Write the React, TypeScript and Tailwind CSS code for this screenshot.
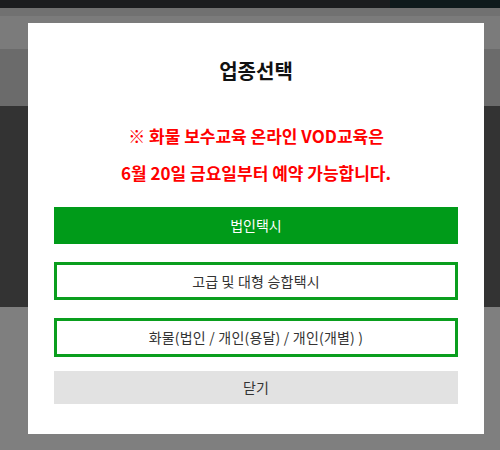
export default function App() {
  return (
    <div
      className="relative h-[450px] w-[500px] overflow-hidden bg-[#7f7f7f]"
      style={{ fontFamily: '"Noto Sans CJK KR", "Noto Sans", sans-serif' }}
    >
      {/* dimmed page behind the overlay */}
      <div className="flex h-[8px] bg-[#1c1d1f]">
        <div className="ml-auto w-[110px] bg-[#0f1a1c]" />
      </div>
      <div className="h-[8px] bg-[#717171]" />
      <div className="h-[33px] bg-[#7b7b7b]" />
      <div className="h-[57px] bg-[#6b6b6b]" />
      <div className="h-[201px] bg-[#333333]" />

      {/* modal */}
      <div className="absolute left-[28px] top-[23px] flex h-[411px] w-[456px] flex-col bg-white px-[26px] pt-[34px]">
        <h2 className="text-center text-[20px] font-bold leading-[28px] text-[#111]">
          업종선택
        </h2>

        <p className="mt-[32px] text-center text-[17px] font-bold leading-[37px] text-[#ff0000]">
          ※ 화물 보수교육 온라인 VOD교육은
          <br />
          6월 20일 금요일부터 예약 가능합니다.
        </p>

        <div className="mt-[16px] flex flex-col">
          <button className="h-[37px] bg-[#009b19] text-[14px] text-white">
            법인택시
          </button>
          <button className="mt-[18px] h-[38px] border-[3px] border-[#0a9e1e] bg-white text-[14px] tracking-[0.2px] text-[#333]">
            고급 및 대형 승합택시
          </button>
          <button className="mt-[18px] h-[39px] border-[3px] border-[#0a9e1e] bg-white text-[14px] tracking-[0.2px] text-[#333]">
            화물(법인 / 개인(용달) / 개인(개별) )
          </button>
          <button className="mt-[14px] h-[33px] bg-[#e2e2e2] text-[14px] text-[#333]">
            닫기
          </button>
        </div>
      </div>
    </div>
  );
}
